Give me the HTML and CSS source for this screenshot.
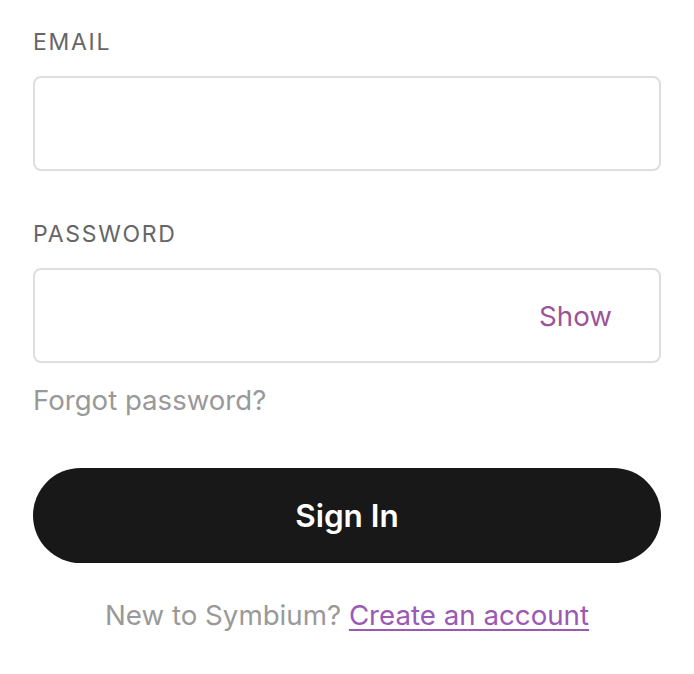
FILE: index.html
```html
<!DOCTYPE html>
<html lang="en">
<head>
<meta charset="utf-8">
<title>Sign In</title>
<link rel="stylesheet" href="styles.css">
</head>
<body>
<form class="form">
  <div class="field">
    <label class="label" for="email">EMAIL</label>
    <div class="input-box"><input id="email" class="input" type="email"></div>
  </div>
  <div class="field">
    <label class="label" for="password">PASSWORD</label>
    <div class="input-box"><input id="password" class="input" type="password"><span class="show">Show</span></div>
  </div>
  <a class="forgot" href="#">Forgot password?</a>
  <button class="btn" type="button">Sign In</button>
  <p class="signup">New to Symbium? <a class="link" href="#">Create an account</a></p>
</form>
</body>
</html>
```
FILE: styles.css
```css
html, body { margin: 0; padding: 0; background: #fff; }
body { font-family: Inter, "Noto Sans", sans-serif; }
.form { padding: 26px 33px 0; display: flex; flex-direction: column; }
.field { display: flex; flex-direction: column; margin-bottom: 47px; }
.label { font-size: 23px; line-height: 32px; letter-spacing: 1.7px; color: #666; margin-bottom: 18px; }
.input-box { box-sizing: border-box; height: 95px; border: 2px solid #dedede; border-radius: 8px; display: flex; align-items: center; padding: 0 47px 0 24px; }
.input { flex: 1; border: 0; outline: none; font: inherit; font-size: 27.7px; background: transparent; min-width: 0; }
.show { color: #9b5597; font-size: 27.7px; }
.forgot { color: #999; font-size: 27.6px; line-height: 34px; text-decoration: none; margin-top: -27px; align-self: flex-start; }
.btn { margin-top: 51px; height: 95px; border: 0; border-radius: 48px; background: #181818; color: #fff; font-family: inherit; font-size: 31.5px; font-weight: 600; }
.signup { text-align: center; color: #999; font-size: 27.7px; line-height: 34px; margin: 35px 0 0; }
.link { color: #9b59b6; text-decoration: underline; text-underline-offset: 4px; text-decoration-thickness: 2px; }
```
